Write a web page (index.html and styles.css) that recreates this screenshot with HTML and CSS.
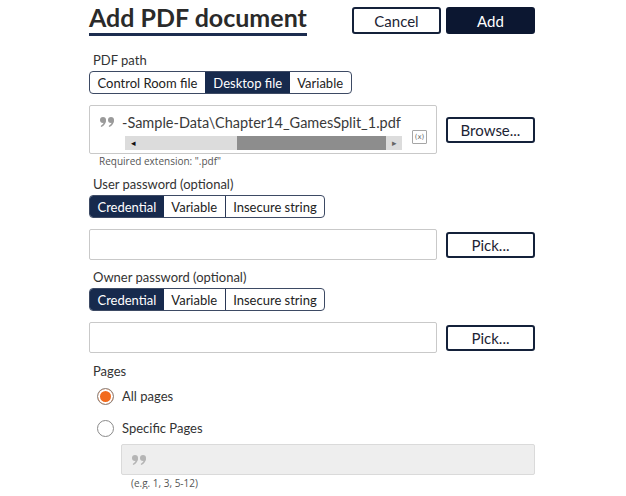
FILE: index.html
```html
<!DOCTYPE html>
<html>
<head>
<meta charset="utf-8">
<link rel="stylesheet" href="styles.css">
</head>
<body>
<div class="page">
  <header class="head">
    <h1 class="title">Add PDF document</h1>
    <div class="actions">
      <button class="btn">Cancel</button>
      <button class="btn primary">Add</button>
    </div>
  </header>

  <section class="field first">
    <div class="label">PDF path</div>
    <div class="seg">
      <span class="opt">Control Room file</span>
      <span class="opt on">Desktop file</span>
      <span class="opt">Variable</span>
    </div>
    <div class="row">
      <div class="input path">
        <div class="path-line">
          <svg class="quote" viewBox="0 0 15 10" width="15" height="10"><circle cx="3" cy="3" r="3"/><path d="M6 3 C6 6.5 4.2 8.8 1.2 10 L0.7 8.9 C2.4 8 3.4 6.8 3.6 5.6 Z"/><circle cx="11" cy="3" r="3"/><path d="M14 3 C14 6.5 12.2 8.8 9.2 10 L8.7 8.9 C10.4 8 11.4 6.8 11.6 5.6 Z"/></svg>
          <span class="path-text">-Sample-Data\Chapter14_GamesSplit_1.pdf</span>
        </div>
        <div class="hscroll">
          <span class="arr left">◂</span>
          <span class="track"><span class="thumb"></span></span>
          <span class="arr right">▸</span>
        </div>
        <span class="varbtn">(x)</span>
      </div>
      <button class="btn side">Browse...</button>
    </div>
    <div class="hint">Required extension: ".pdf"</div>
  </section>

  <section class="field">
    <div class="label">User password (optional)</div>
    <div class="seg">
      <span class="opt on">Credential</span>
      <span class="opt">Variable</span>
      <span class="opt">Insecure string</span>
    </div>
    <div class="row">
      <div class="input plain"></div>
      <button class="btn side">Pick...</button>
    </div>
  </section>

  <section class="field">
    <div class="label">Owner password (optional)</div>
    <div class="seg">
      <span class="opt on">Credential</span>
      <span class="opt">Variable</span>
      <span class="opt">Insecure string</span>
    </div>
    <div class="row">
      <div class="input plain"></div>
      <button class="btn side">Pick...</button>
    </div>
  </section>

  <section class="field pages">
    <div class="label">Pages</div>
    <label class="radio"><span class="dot checked"></span>All pages</label>
    <label class="radio second"><span class="dot"></span>Specific Pages</label>
    <div class="input disabled"><svg class="quote" viewBox="0 0 15 10" width="15" height="10"><circle cx="3" cy="3" r="3"/><path d="M6 3 C6 6.5 4.2 8.8 1.2 10 L0.7 8.9 C2.4 8 3.4 6.8 3.6 5.6 Z"/><circle cx="11" cy="3" r="3"/><path d="M14 3 C14 6.5 12.2 8.8 9.2 10 L8.7 8.9 C10.4 8 11.4 6.8 11.6 5.6 Z"/></svg></div>
    <div class="hint sub">(e.g. 1, 3, 5-12)</div>
  </section>
</div>
</body>
</html>
```

FILE: styles.css
```css
* { box-sizing: border-box; }
html, body { margin: 0; padding: 0; background: #fff; }
body { font-family: Lato, "Open Sans", sans-serif; color: #333; }

.page { margin-left: 89px; width: 446px; }

.head { display: flex; justify-content: space-between; align-items: flex-start; }
.title {
  margin: 0;
  padding-top: 2px;
  font-size: 25px;
  line-height: 30px;
  font-weight: 700;
  color: #2a2a2a;
  border-bottom: 3px solid #1c2d4f;
  padding-bottom: 1px;
}
.actions { display: flex; gap: 5px; margin-top: 7px; }

.btn {
  font-family: Lato, sans-serif;
  font-size: 15px;
  height: 27px;
  width: 89px;
  background: #fff;
  color: #1c2434;
  border: 2px solid #14213a;
  border-radius: 3px;
  padding: 0;
  cursor: pointer;
}
.btn.primary { background: #0c1731; color: #fff; border-color: #0c1731; }
.btn.side { height: 26px; }

.field { margin-top: 10px; }
.field.first { margin-top: 17px; }

.label { font-size: 13px; line-height: 15px; margin-left: 4px; color: #333; }

.seg {
  display: inline-flex;
  margin-top: 3px;
  height: 23px;
  border: 1px solid #3d4a64;
  border-radius: 4px;
  overflow: hidden;
}
.opt {
  display: flex;
  align-items: center;
  padding: 0 7.5px;
  font-size: 13px;
  color: #222;
  border-left: 1px solid #2a3856;
}
.opt:first-child { border-left: 0; }
.opt.on { background: #172a4d; color: #fff; border-color: #172a4d; }
.opt.on + .opt { border-left: 0; }

.row { display: flex; align-items: center; gap: 9px; margin-top: 11px; }

.input {
  width: 348px;
  border: 1px solid #c9c9c9;
  border-radius: 2px;
  background: #fff;
}
.input.plain { height: 31px; }

.input.path { height: 49px; position: relative; padding: 4px 0 0 10px; }
.path-line { display: flex; align-items: center; gap: 7px; height: 24px; }
.quote { fill: #9a9a9a; flex: none; }
.path-text { font-size: 14.5px; color: #3a3a3a; white-space: nowrap; }
.hscroll {
  display: flex;
  height: 14px;
  margin: 2px 0 0 25px;
  width: 277px;
  background: #dcdcdc;
}
.arr { width: 16px; font-size: 9px; line-height: 14px; text-align: center; color: #111; }
.arr.right { color: #666; }
.track { flex: 1; display: flex; }
.thumb { margin-left: 96px; width: 149px; background: #8d8d8d; }
.varbtn {
  position: absolute;
  right: 9px;
  top: 24px;
  width: 15px;
  height: 14px;
  border: 1px solid #a6a6a6;
  border-radius: 1px;
  font-size: 7px;
  line-height: 12px;
  text-align: center;
  color: #666;
  font-family: "DejaVu Sans", sans-serif;
}

.hint {
  font-family: "Open Sans", sans-serif;
  font-size: 10px;
  line-height: 12px;
  color: #555;
  margin: 1px 0 0 10px;
}

.pages { margin-top: 11px; }
.radio {
  display: flex;
  align-items: center;
  gap: 8px;
  height: 20px;
  margin: 7px 0 0 8px;
  font-size: 13px;
  color: #333;
}
.radio.second { margin-top: 12px; }
.dot {
  width: 17px;
  height: 17px;
  border-radius: 50%;
  border: 1px solid #8a8a8a;
  background: #fff;
}
.dot.checked { background: #f26a1c; box-shadow: inset 0 0 0 2px #fff; }

.input.disabled {
  margin: 6px 0 0 32px;
  width: 414px;
  height: 31px;
  background: #eeeeee;
  border-color: #dadada;
  display: flex;
  align-items: center;
  padding-left: 10px;
}
.input.disabled .quote { fill: #b5b5b5; }
.hint.sub { margin: 2px 0 0 42px; }
```
